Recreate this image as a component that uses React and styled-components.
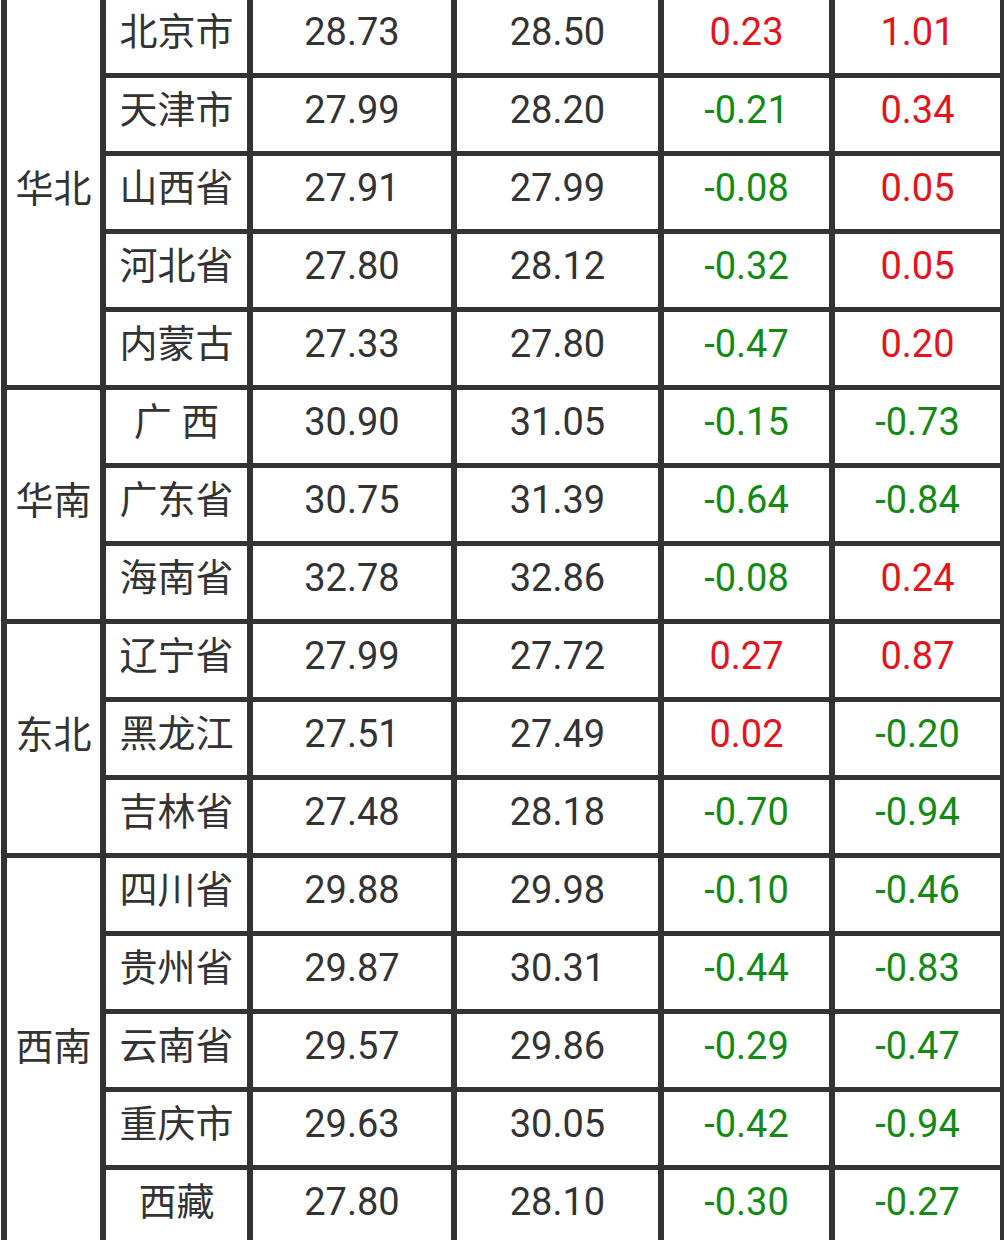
import React from "react"
import styled, { createGlobalStyle } from "styled-components"

const GlobalStyle = createGlobalStyle`
  html, body {
    margin: 0;
    padding: 0;
    background: #fff;
  }
  body {
    font-family: Roboto, "Noto Sans CJK SC", sans-serif;
    overflow: hidden;
  }
`

const Page = styled.div`
  width: 1004px;
  height: 1240px;
  overflow: hidden;
  background: #fff;
`

const Grid = styled.div`
  display: grid;
  grid-template-columns: 93px 141px 198px 201px 165px 165px;
  grid-auto-rows: 73px;
  column-gap: 6px;
  row-gap: 5px;
  padding: 0 6px 5px 6px;
  margin-left: 1px;
  width: max-content;
  background: #333;
`

const Cell = styled.div`
  display: flex;
  align-items: center;
  justify-content: center;
  padding-bottom: 9px;
  background: #fff;
  font-size: 38px;
  line-height: 1;
  white-space: pre;
  color: ${(p) => (p.$tone === "up" ? "#e3141c" : p.$tone === "down" ? "#138a14" : "#333")};
`

const Region = styled(Cell)`
  grid-row: span ${(p) => p.$span};
  padding-bottom: 8px;
`

const groups = [
  {
    name: "华北",
    rows: [
      ["北京市", "28.73", "28.50", "0.23", "1.01"],
      ["天津市", "27.99", "28.20", "-0.21", "0.34"],
      ["山西省", "27.91", "27.99", "-0.08", "0.05"],
      ["河北省", "27.80", "28.12", "-0.32", "0.05"],
      ["内蒙古", "27.33", "27.80", "-0.47", "0.20"],
    ],
  },
  {
    name: "华南",
    rows: [
      ["广 西", "30.90", "31.05", "-0.15", "-0.73"],
      ["广东省", "30.75", "31.39", "-0.64", "-0.84"],
      ["海南省", "32.78", "32.86", "-0.08", "0.24"],
    ],
  },
  {
    name: "东北",
    rows: [
      ["辽宁省", "27.99", "27.72", "0.27", "0.87"],
      ["黑龙江", "27.51", "27.49", "0.02", "-0.20"],
      ["吉林省", "27.48", "28.18", "-0.70", "-0.94"],
    ],
  },
  {
    name: "西南",
    rows: [
      ["四川省", "29.88", "29.98", "-0.10", "-0.46"],
      ["贵州省", "29.87", "30.31", "-0.44", "-0.83"],
      ["云南省", "29.57", "29.86", "-0.29", "-0.47"],
      ["重庆市", "29.63", "30.05", "-0.42", "-0.94"],
      ["西藏", "27.80", "28.10", "-0.30", "-0.27"],
    ],
  },
]

const tone = (v) => (v.startsWith("-") ? "down" : "up")

export default function App() {
  return (
    <Page>
      <GlobalStyle />
      <Grid>
        {groups.map((g) =>
          g.rows.map((r, i) => (
            <React.Fragment key={g.name + r[0]}>
              {i === 0 && <Region $span={g.rows.length}>{g.name}</Region>}
              <Cell>{r[0]}</Cell>
              <Cell>{r[1]}</Cell>
              <Cell>{r[2]}</Cell>
              <Cell $tone={tone(r[3])}>{r[3]}</Cell>
              <Cell $tone={tone(r[4])}>{r[4]}</Cell>
            </React.Fragment>
          ))
        )}
      </Grid>
    </Page>
  )
}
